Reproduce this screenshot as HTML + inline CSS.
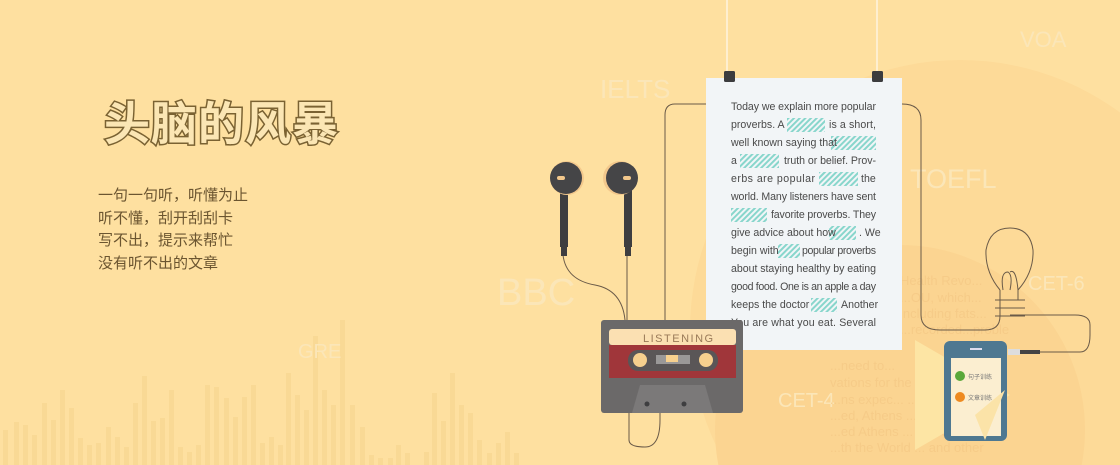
<!DOCTYPE html>
<html><head><meta charset="utf-8"><style>
html,body{margin:0;padding:0;overflow:hidden}
body{width:1120px;height:465px;overflow:hidden;background:#fee0a0;position:relative;font-family:"Liberation Sans","Noto Sans CJK SC",sans-serif}
.t{position:absolute;left:104px;top:93px;font-size:46px;line-height:56px;font-weight:bold;color:#fbe6b4;-webkit-text-stroke:3px #7a6232;paint-order:stroke fill;letter-spacing:1px;font-family:"WenQuanYi Zen Hei","Noto Sans CJK SC",sans-serif}
.s{position:absolute;left:98px;top:185px;font-size:15px;line-height:22.5px;color:#6b5530}
svg{position:absolute;left:0;top:0}
</style></head><body>
<svg width="1120" height="465">
<circle cx="960" cy="330" r="270" fill="#fdda98"/>
<circle cx="900" cy="430" r="185" fill="#fbd491"/>
<g fill="#f9d995">
<rect x="3" y="430" width="5" height="35"/><rect x="14" y="422" width="5" height="43"/><rect x="23" y="425" width="5" height="40"/><rect x="32" y="435" width="5" height="30"/><rect x="42" y="403" width="5" height="62"/><rect x="51" y="420" width="5" height="45"/><rect x="60" y="390" width="5" height="75"/><rect x="69" y="408" width="5" height="57"/><rect x="78" y="438" width="5" height="27"/><rect x="87" y="445" width="5" height="20"/><rect x="96" y="443" width="5" height="22"/><rect x="106" y="427" width="5" height="38"/><rect x="115" y="437" width="5" height="28"/><rect x="124" y="447" width="5" height="18"/><rect x="133" y="403" width="5" height="62"/><rect x="142" y="376" width="5" height="89"/><rect x="151" y="421" width="5" height="44"/><rect x="160" y="418" width="5" height="47"/><rect x="169" y="390" width="5" height="75"/><rect x="178" y="447" width="5" height="18"/><rect x="187" y="452" width="5" height="13"/><rect x="196" y="445" width="5" height="20"/><rect x="205" y="385" width="5" height="80"/><rect x="214" y="387" width="5" height="78"/><rect x="224" y="398" width="5" height="67"/><rect x="233" y="417" width="5" height="48"/><rect x="242" y="397" width="5" height="68"/><rect x="251" y="385" width="5" height="80"/><rect x="260" y="443" width="5" height="22"/><rect x="269" y="437" width="5" height="28"/><rect x="278" y="445" width="5" height="20"/><rect x="286" y="373" width="5" height="92"/><rect x="295" y="395" width="5" height="70"/><rect x="304" y="410" width="5" height="55"/><rect x="313" y="336" width="5" height="129"/><rect x="322" y="390" width="5" height="75"/><rect x="331" y="405" width="5" height="60"/><rect x="340" y="320" width="5" height="145"/><rect x="350" y="405" width="5" height="60"/><rect x="360" y="427" width="5" height="38"/><rect x="369" y="455" width="5" height="10"/><rect x="378" y="458" width="5" height="7"/><rect x="388" y="458" width="5" height="7"/><rect x="396" y="445" width="5" height="20"/><rect x="405" y="453" width="5" height="12"/><rect x="424" y="452" width="5" height="13"/><rect x="432" y="393" width="5" height="72"/><rect x="441" y="421" width="5" height="44"/><rect x="450" y="373" width="5" height="92"/><rect x="459" y="405" width="5" height="60"/><rect x="468" y="413" width="5" height="52"/><rect x="477" y="440" width="5" height="25"/><rect x="487" y="453" width="5" height="12"/><rect x="496" y="443" width="5" height="22"/><rect x="505" y="432" width="5" height="33"/><rect x="514" y="453" width="5" height="12"/>
</g>
<g fill="#fbe6b8" font-family="Liberation Sans" >
<text x="600" y="98" font-size="26">IELTS</text>
<text x="1020" y="47" font-size="22">VOA</text>
<text x="497" y="305" font-size="38">BBC</text>
<text x="298" y="358" font-size="20">GRE</text>
<text x="910" y="188" font-size="27">TOEFL</text>
<text x="1028" y="290" font-size="20">CET-6</text>
<text x="778" y="407" font-size="20">CET-4</text>
</g>
<g fill="#f6cb88" font-size="13" font-family="Liberation Sans">
<text x="900" y="285">Health Revo...</text><text x="900" y="302">...OU, which...</text><text x="900" y="318">including fats...</text><text x="900" y="334">...recorded...proble</text><text x="830" y="370">...need to...</text><text x="830" y="387">vations for the ...</text><text x="830" y="404">...ns expec... ...reports</text><text x="830" y="420">...ed, Athens ... Olympic</text><text x="830" y="436">...ed Athens ... move the game</text><text x="830" y="452">...th the World ... and other</text>
</g>
<line x1="727" y1="0" x2="727" y2="74" stroke="#fff4e0" stroke-width="1.5"/>
<line x1="877" y1="0" x2="877" y2="74" stroke="#fff4e0" stroke-width="1.5"/>
<g fill="none" stroke="#6a5a48" stroke-width="1">
<path d="M706 104 H675 Q665 104 665 115 V340"/>
<path d="M902 104 Q921 104 921 120 V315 Q921 330 940 330 H985 Q1000 330 1000 316 V290"/>
<path d="M1040 352 H1080 Q1090 352 1090 335 V325 Q1090 315 1075 315 H1010"/>
<path d="M563 255 Q566 280 595 285 Q622 290 625 320 V345"/>
<path d="M627 255 V320"/>
<path d="M629 412 V440 Q629 447 645 447 Q660 447 660 420 V412"/>
<path d="M1000 290 Q985 272 986 250 Q990 228 1010 228 Q1030 228 1033 250 Q1034 272 1018 290 V300 M995 300 H1025 M995 308 H1025 M995 316 H1025 M1003 290 Q1000 272 1008 272 Q1013 275 1010 290 M1010 272 Q1016 268 1018 290"/>
</g>
<rect x="706" y="78" width="196" height="272" fill="#f2f5f7"/>
<rect x="724" y="71" width="11" height="11" rx="1.5" fill="#3c3c3e"/><rect x="872" y="71" width="11" height="11" rx="1.5" fill="#3c3c3e"/>
<defs><pattern id="h" width="4" height="4" patternUnits="userSpaceOnUse" patternTransform="rotate(45)"><rect width="2" height="4" fill="#88d6cc"/></pattern></defs>
<g fill="url(#h)">
<rect x="787" y="118" width="38" height="14"/><rect x="831" y="136" width="45" height="14"/><rect x="740" y="154" width="39" height="14"/><rect x="819" y="172" width="39" height="14"/><rect x="731" y="208" width="36" height="14"/><rect x="829" y="226" width="27" height="14"/><rect x="778" y="244" width="22" height="14"/><rect x="811" y="298" width="26" height="14"/>
</g>
<g fill="#4a4a4a" font-size="10.6" font-family="Liberation Sans">
<text x="731" y="110" textLength="145">Today we explain more popular</text>
<text x="731" y="128">proverbs.  A</text><text x="829" y="128" textLength="47">is a short,</text>
<text x="731" y="146">well known saying that</text>
<text x="731" y="164">a</text><text x="784" y="164" textLength="92">truth or belief. Prov-</text>
<text x="731" y="182" textLength="84">erbs  are  popular</text><text x="861" y="182">the</text>
<text x="731" y="200" textLength="145">world. Many listeners have sent</text>
<text x="771" y="218" textLength="105">favorite proverbs. They</text>
<text x="731" y="236">give advice about how</text><text x="859" y="236">. We</text>
<text x="731" y="254">begin with</text><text x="802" y="254" textLength="74">popular proverbs</text>
<text x="731" y="272" textLength="145">about staying healthy by eating</text>
<text x="731" y="290" textLength="145">good food. One is an apple a day</text>
<text x="731" y="308">keeps the doctor</text><text x="841" y="308">Another</text>
<text x="731" y="326" textLength="145">You are what you eat. Several</text>
</g>
<g>
<rect x="560" y="185" width="8" height="62" fill="#3e3e40"/><rect x="561" y="244" width="6" height="12" fill="#3e3e40"/>
<rect x="624" y="185" width="8" height="62" fill="#3e3e40"/><rect x="625" y="244" width="6" height="12" fill="#3e3e40"/>
<circle cx="567" cy="178" r="17" fill="#f3c88c"/><circle cx="566" cy="178" r="16" fill="#454547"/>
<circle cx="620" cy="178" r="17" fill="#f3c88c"/><circle cx="622" cy="178" r="16" fill="#454547"/>
<rect x="557" y="176" width="8" height="4" rx="2" fill="#f3c88c"/><rect x="623" y="176" width="8" height="4" rx="2" fill="#f3c88c"/>
</g>
<rect x="601" y="320" width="142" height="93" rx="3" fill="#6b6969"/>
<rect x="609" y="329" width="127" height="16" rx="3" fill="#fbe0b2"/>
<text x="643" y="342" font-size="11" fill="#9a7a58" letter-spacing="1.5" font-family="Liberation Sans">LISTENING</text>
<rect x="609" y="345" width="127" height="33" fill="#a0363a"/>
<rect x="628" y="350" width="90" height="21" rx="10" fill="#5a5657"/>
<circle cx="640" cy="360" r="7" fill="#f7d08e"/><circle cx="706" cy="360" r="7" fill="#f7d08e"/>
<rect x="656" y="355" width="34" height="9" fill="#9a9898"/><rect x="666" y="355" width="12" height="7" fill="#f7d08e"/>
<path d="M632 413 L640 385 H705 L713 413Z" fill="#7b7979"/>
<circle cx="647" cy="404" r="2.5" fill="#3e3e40"/><circle cx="684" cy="404" r="2.5" fill="#3e3e40"/>
<path d="M915 340 L1010 395 L915 450Z" fill="#fde5a4"/>
<rect x="944" y="341" width="63" height="100" rx="6" fill="#4e7891"/>
<rect x="951" y="358" width="50" height="78" fill="#fbeed0"/>
<rect x="970" y="348" width="12" height="2" fill="#dde"/>
<circle cx="960" cy="376" r="5" fill="#5aa83a"/><circle cx="960" cy="397" r="5" fill="#ee8a20"/>
<text x="968" y="379" font-size="6" fill="#777" font-family="Noto Sans CJK SC">句子训练</text>
<text x="968" y="400" font-size="6" fill="#777" font-family="Noto Sans CJK SC">文章训练</text>
<path d="M975 415 L1005 390 L985 440Z" fill="#fbe3a8"/>
<rect x="1008" y="349" width="12" height="6" fill="#ddd"/><rect x="1020" y="350" width="20" height="4" fill="#444"/>
</svg>
<div class="t">头脑的风暴</div>
<div class="s">一句一句听，听懂为止<br>听不懂，刮开刮刮卡<br>写不出，提示来帮忙<br>没有听不出的文章</div>
</body></html>
